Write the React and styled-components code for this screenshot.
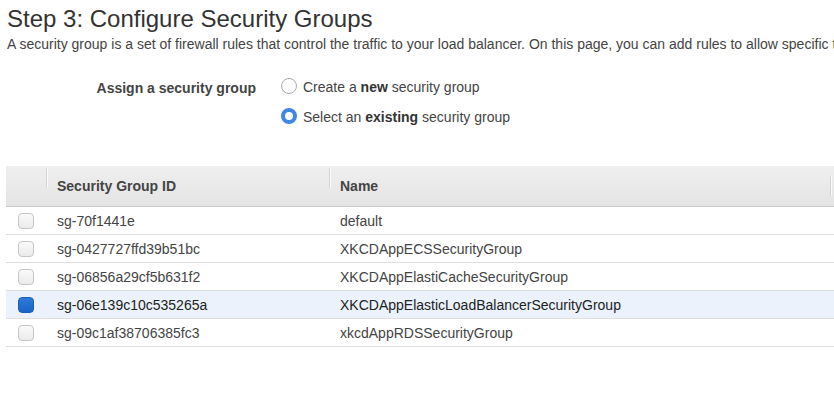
import React from "react";
import styled, { createGlobalStyle } from "styled-components";

const GlobalStyle = createGlobalStyle`
  html, body {
    margin: 0;
    padding: 0;
    background: #fff;
    overflow: hidden;
  }
  body {
    font-family: "Liberation Sans", Arial, sans-serif;
    color: #444;
  }
`;

const groups = [
  { id: "sg-70f1441e", name: "default" },
  { id: "sg-0427727ffd39b51bc", name: "XKCDAppECSSecurityGroup" },
  { id: "sg-06856a29cf5b631f2", name: "XKCDAppElastiCacheSecurityGroup" },
  { id: "sg-06e139c10c535265a", name: "XKCDAppElasticLoadBalancerSecurityGroup", selected: true },
  { id: "sg-09c1af38706385fc3", name: "xkcdAppRDSSecurityGroup" },
];

const App = () => {
  return (
    <Page>
      <GlobalStyle />
      <Title>Step 3: Configure Security Groups</Title>
      <Description>
        A security group is a set of firewall rules that control the traffic to your load
        balancer. On this page, you can add rules to allow specific traffic
      </Description>

      <FormRow>
        <Label>Assign a security group</Label>
        <Options>
          <Option>
            <Radio />
            <span>Create a <b>new</b> security group</span>
          </Option>
          <Option>
            <Radio checked />
            <span>Select an <b>existing</b> security group</span>
          </Option>
        </Options>
      </FormRow>

      <TableWrap>
        <Table>
          <HeaderRow>
            <CheckCell />
            <HeadCell width="283px">Security Group ID</HeadCell>
            <HeadCell width="501px">Name</HeadCell>
            <HeadCell width="200px" />
          </HeaderRow>
          {groups.map((g) => (
            <Row key={g.id} selected={g.selected}>
              <CheckCell>
                <Checkbox checked={g.selected} />
              </CheckCell>
              <Cell width="283px">{g.id}</Cell>
              <Cell width="501px">{g.name}</Cell>
              <Cell width="200px" />
            </Row>
          ))}
        </Table>
      </TableWrap>
    </Page>
  );
};

const Page = styled.div`
  width: 834px;
  height: 405px;
  overflow: hidden;
`;

const Title = styled.h1`
  margin: 0;
  padding: 5px 0 0 7px;
  font-size: 24px;
  font-weight: 400;
  line-height: 28px;
  color: #333;
  white-space: nowrap;
`;

const Description = styled.div`
  padding: 3px 0 0 7px;
  font-size: 14px;
  line-height: 16px;
  color: #444;
  white-space: nowrap;
  overflow: hidden;
`;

const FormRow = styled.div`
  display: flex;
  padding-top: 25px;
  height: 89px;
`;

const Label = styled.div`
  width: 256px;
  text-align: right;
  font-size: 14px;
  font-weight: 700;
  color: #444;
  line-height: 20px;
  padding-top: 1px;
`;

const Options = styled.div`
  display: flex;
  flex-direction: column;
  gap: 10px;
  margin-left: 25px;
`;

const Option = styled.div`
  display: flex;
  align-items: center;
  gap: 6px;
  font-size: 14px;
  line-height: 20px;
  color: #444;

  b {
    color: #333;
  }
`;

const Radio = styled.span`
  box-sizing: border-box;
  width: 16px;
  height: 16px;
  border-radius: 50%;
  background: #fff;
  border: ${(p) => (p.checked ? "4px solid #3f86e5" : "1px solid #a9a9a9")};
  margin-top: ${(p) => (p.checked ? "-2px" : "-3px")};
`;

const TableWrap = styled.div`
  padding-left: 6px;
  width: 1100px;
`;

const Table = styled.div`
  display: flex;
  flex-direction: column;
`;

const HeaderRow = styled.div`
  display: flex;
  height: 40px;
  align-items: center;
  background: linear-gradient(#efefef, #e4e4e4);
  border-bottom: 1px solid #c8c8c8;
  font-size: 14px;
  font-weight: 700;
  color: #444;
`;

const Row = styled.div`
  display: flex;
  height: 27px;
  align-items: center;
  background: ${(p) => (p.selected ? "#ebf2fc" : "#fff")};
  border-bottom: 1px solid #dedede;
  font-size: 14px;
  color: ${(p) => (p.selected ? "#222" : "#444")};
`;

const CheckCell = styled.div`
  width: 40px;
  display: flex;
  justify-content: center;
  align-items: center;
`;

const HeadCell = styled.div`
  position: relative;
  box-sizing: border-box;
  width: ${(p) => p.width};
  padding-left: 11px;
  color: #444;

  &::before {
    content: "";
    position: absolute;
    left: 0;
    top: -10px;
    width: 1px;
    height: 20px;
    background: #d4d4d4;
    box-shadow: 1px 0 0 #fafafa;
  }
`;

const Cell = styled.div`
  box-sizing: border-box;
  width: ${(p) => p.width};
  padding-left: 11px;
  white-space: nowrap;
`;

const Checkbox = styled.span`
  box-sizing: border-box;
  width: 16px;
  height: 16px;
  border-radius: 4px;
  border: 1px solid ${(p) => (p.checked ? "#1b5fb8" : "#c6c6c6")};
  background: ${(p) =>
    p.checked ? "linear-gradient(#2d7ad9, #1a64c4)" : "linear-gradient(#fafafa, #eaeaea)"};
`;

export default App;
